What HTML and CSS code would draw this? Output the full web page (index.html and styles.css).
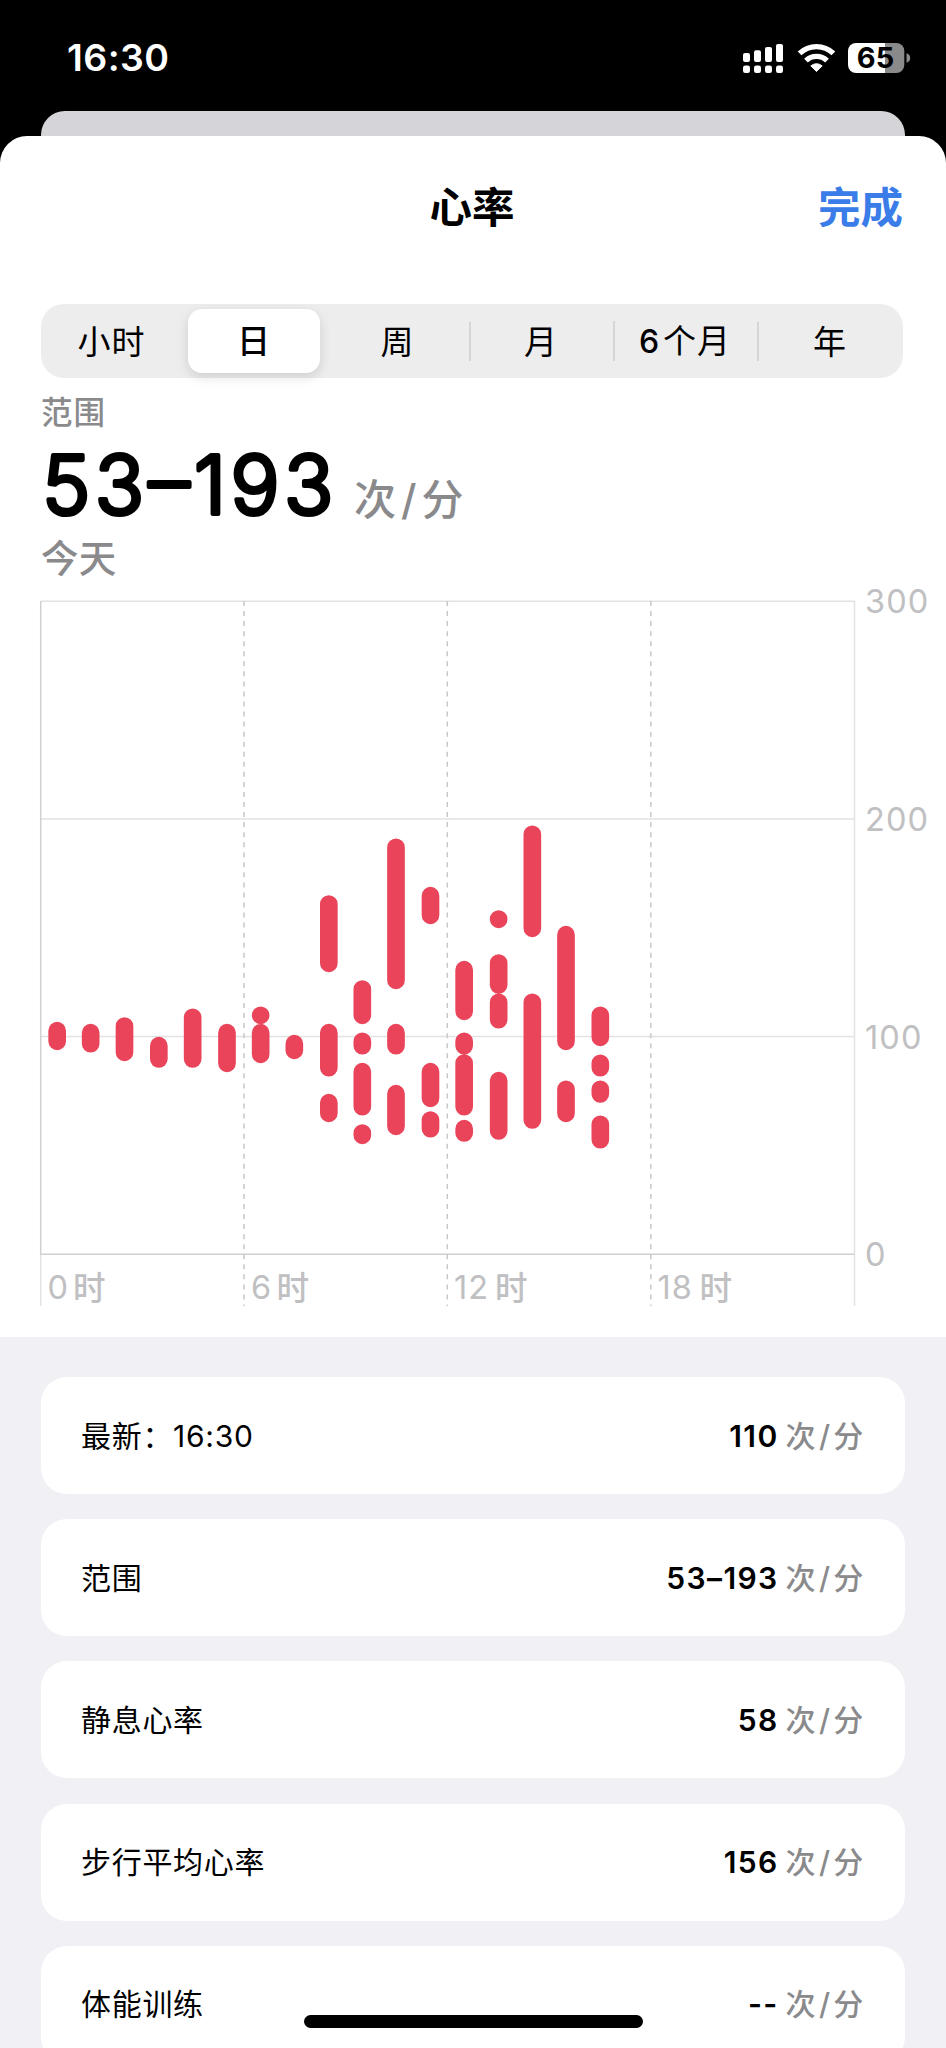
FILE: index.html
```html
<!DOCTYPE html>
<html lang="zh-CN">
<head>
<meta charset="utf-8">
<title>心率</title>
<link rel="stylesheet" href="styles.css">
</head>
<body>
<div class="phone">
  <header class="status">
    <span class="clock">16:30</span>
    <svg class="status-icons" width="172" height="36" viewBox="741 40 172 36">
      <g fill="#fff">
        <rect x="743" y="53" width="7" height="9" rx="2"/>
        <rect x="754" y="50.3" width="7" height="11.7" rx="2"/>
        <rect x="765" y="47" width="7" height="15" rx="2"/>
        <rect x="776" y="44" width="7" height="18" rx="2"/>
        <rect x="743" y="65.6" width="7" height="7.4" rx="2.2"/>
        <rect x="754" y="65.6" width="7" height="7.4" rx="2.2"/>
        <rect x="765" y="65.6" width="7" height="7.4" rx="2.2"/>
        <rect x="776" y="65.6" width="7" height="7.4" rx="2.2"/>
        <path d="M816.5 71.5l-5.7-5.6q5.7-4.4 11.4 0z" stroke="#fff" stroke-width="1" stroke-linejoin="round"/>
      </g>
      <g fill="none" stroke="#fff" stroke-width="5.4">
        <path d="M799.6 53.4a24.5 24.5 0 0 1 33.8 0"/>
        <path d="M806 60.6a15.2 15.2 0 0 1 21 0"/>
      </g>
      <path d="M885 43H896.3a8 8 0 0 1 8 8V65a8 8 0 0 1-8 8H885z" fill="#8a8a8a"/>
      <path d="M885 43H856a8 8 0 0 0-8 8V65a8 8 0 0 0 8 8H885z" fill="#fff"/>
      <path d="M906.5 53.2q3.7 1 3.7 4.8t-3.7 4.8z" fill="#8a8a8a"/>
      <text class="battery" x="875.5" y="68.4" text-anchor="middle">65</text>
    </svg>
  </header>
  <div class="back-sheet"></div>
  <main class="sheet">
    <nav class="titlebar">
      <h1 class="title">心率</h1>
      <a class="done">完成</a>
    </nav>
    <div class="segments">
      <span class="seg">小时</span>
      <span class="seg seg-on">日</span>
      <span class="seg">周</span>
      <span class="seg seg-line">月</span>
      <span class="seg seg-line"><b class="six">6</b>个月</span>
      <span class="seg seg-line">年</span>
    </div>
    <section class="summary">
      <div class="caption">范围</div>
      <div class="reading">
        <svg class="range" width="302" height="99" viewBox="41 431 302 99">
          <text class="range-text" x="42" y="513" textLength="291.5" lengthAdjust="spacing">53–193</text>
        </svg>
        <span class="unit unit-big">次<i>/</i>分</span>
      </div>
      <div class="today">今天</div>
    </section>
    <svg class="chart" width="946" height="752" viewBox="0 585 946 752">
      <g class="grid">
        <path d="M41 601.3H854.5M41 819H854.5M41 1036.6H854.5"/>
        <path d="M854.5 601V1306M40.7 1254V1306"/>
        <path class="axis" d="M40.7 601V1254.3H854.5"/>
        <path class="dash" d="M244 601V1306M447.3 601V1306M650.8 601V1306"/>
      </g>
      <g class="bars" transform="translate(0 800) scale(.33333)">
        <path d="M171.5 692V724"/>
        <path d="M272 698V731"/>
        <path d="M373.5 678V757"/>
        <path d="M476.5 737V777"/>
        <path d="M578 652V777"/>
        <path d="M681 698V790"/>
        <path d="M782 646V646.1M782 698V763"/>
        <path d="M883 731V751"/>
        <path d="M986.5 312V490M986.5 698V803M986.5 908V940"/>
        <path d="M1087 567V646M1087 724V737M1087 815V920M1087 999V1006"/>
        <path d="M1188 142V541M1188 698V737M1188 881V979"/>
        <path d="M1291.5 287V346M1291.5 815V895M1291.5 960V986"/>
        <path d="M1392.5 509V634M1392.5 724V737M1392.5 789V920M1392.5 986V999"/>
        <path d="M1496 357V358M1496 489V555M1496 607V659M1496 842V993"/>
        <path d="M1597 103V385M1597 607V960"/>
        <path d="M1698 404V724M1698 868V940"/>
        <path d="M1801 646V712M1801 790V803M1801 868V882M1801 973V1019"/>
      </g>
      <g class="ticks">
        <text x="865" y="613">300</text>
        <text x="865" y="831">200</text>
        <text x="865" y="1048.5">100</text>
        <text x="865" y="1266">0</text>
        <text x="47.5" y="1299">0</text><text class="hour" x="73" y="1300">时</text>
        <text x="251" y="1299">6</text><text class="hour" x="276.5" y="1300">时</text>
        <text x="454" y="1299">12</text><text class="hour" x="495" y="1300">时</text>
        <text x="657.5" y="1299">18</text><text class="hour" x="699.5" y="1300">时</text>
      </g>
    </svg>
  </main>
  <section class="cards">
    <div class="card"><span>最新：16:30</span><span class="value">110</span><span class="unit">次<i>/</i>分</span></div>
    <div class="card"><span>范围</span><span class="value">53–193</span><span class="unit">次<i>/</i>分</span></div>
    <div class="card"><span>静息心率</span><span class="value">58</span><span class="unit">次<i>/</i>分</span></div>
    <div class="card"><span>步行平均心率</span><span class="value">156</span><span class="unit">次<i>/</i>分</span></div>
    <div class="card"><span>体能训练</span><span class="value">--</span><span class="unit">次<i>/</i>分</span></div>
  </section>
  <div class="home-bar"></div>
</div>
</body>
</html>
```

FILE: styles.css
```css
* { box-sizing: border-box; }

body {
  margin: 0;
  background: #000;
  font-family: Inter, "Noto Sans CJK SC", sans-serif;
  color: #000;
}

i { font-style: normal; }

svg { overflow: visible; }

.phone {
  position: relative;
  width: 946px;
  height: 2048px;
  overflow: hidden;
  background: #000;
}

.status {
  display: flex;
  justify-content: space-between;
  align-items: center;
  height: 111px;
  padding: 5px 33px 0 67px;
}

.clock {
  color: #fff;
  font-size: 37.5px;
  font-weight: 600;
  letter-spacing: .4px;
  line-height: 44px;
}

.battery {
  font-size: 29px;
  font-weight: 650;
}

.back-sheet {
  height: 25px;
  margin: 0 41px;
  border-radius: 24px 24px 0 0;
  background: #d5d4d9;
}

.sheet {
  height: 1201px;
  border-radius: 27px 27px 0 0;
  background: #fff;
}

.titlebar {
  display: grid;
  grid-template-columns: 1fr auto 1fr;
  align-items: center;
  height: 142px;
  padding: 2px 43px 0 41px;
}

.title {
  grid-column: 2;
  margin: 0;
  font-size: 42.5px;
  font-weight: 600;
  line-height: 60px;
}

.done {
  justify-self: end;
  color: #3a7ce8;
  font-size: 42.5px;
  font-weight: 600;
  line-height: 60px;
}

.segments {
  display: grid;
  grid-template-columns: 141px 144px 143px 144px 144px 146px;
  align-items: center;
  height: 74px;
  margin: 26px 43px 0 41px;
  border-radius: 23px;
  background: #ededee;
}

.seg {
  padding-top: 1px;
  text-align: center;
  font-size: 33px;
  letter-spacing: 1px;
  line-height: 38px;
}

.seg-on {
  justify-self: center;
  width: 132px;
  border-radius: 14px;
  background: #fff;
  box-shadow: 0 4px 12px rgba(0, 0, 0, .13);
  font-weight: 500;
  line-height: 63px;
}

.seg-line { box-shadow: inset 2px 0 #d6d6d8; }

.six {
  font-weight: 500;
  font-size: 32px;
  margin-right: 3px;
}

.summary {
  padding: 15px 41px 0;
  color: #8a8a8d;
  font-weight: 500;
}

.caption {
  font-size: 31.5px;
  letter-spacing: 1px;
  line-height: 40px;
}

.reading {
  display: flex;
  align-items: flex-end;
  height: 98px;
}

.range-text {
  font-size: 81.5px;
  font-weight: 300;
  fill: #000;
  stroke: #000;
  stroke-width: 4.2px;
  stroke-linejoin: round;
}

.unit {
  color: #8a8a8c;
  font-size: 30px;
  font-weight: 500;
}

.unit i { padding: 0 2.6px; }

.unit-big {
  margin-left: 11px;
  padding-bottom: 1px;
  font-size: 42px;
  line-height: 60px;
}

.unit-big i { padding: 0 5px; }

.today {
  height: 54px;
  font-size: 37.5px;
  letter-spacing: .3px;
  line-height: 55px;
}

.chart { display: block; }

.grid path {
  fill: none;
  stroke: #e2e2e4;
  stroke-width: 1.5px;
}

.grid .axis { stroke: #d0d0d2; }

.grid .dash {
  stroke: #c8c8ca;
  stroke-dasharray: 5 5.05;
}

.bars path {
  fill: none;
  stroke: #e94459;
  stroke-width: 53px;
  stroke-linecap: round;
}

.ticks {
  fill: #c0c0c2;
  font-size: 32.5px;
  font-weight: 400;
  letter-spacing: 1.1px;
}

.hour { font-weight: 500; }

.cards {
  display: grid;
  grid-auto-rows: 117px;
  gap: 25.2px;
  height: 711px;
  padding: 40px 41px 0;
  background: #f0f0f5;
}

.card {
  display: flex;
  align-items: center;
  padding: 0 41px 0 40px;
  border-radius: 26px;
  background: #fff;
  font-size: 30px;
  letter-spacing: .7px;
  line-height: 44px;
}

.card .value {
  margin-left: auto;
  margin-right: 7px;
  font-weight: 600;
  letter-spacing: 1.4px;
}

.home-bar {
  position: absolute;
  left: 304px;
  bottom: 20px;
  width: 339px;
  height: 13px;
  border-radius: 7px;
  background: #000;
}
```
